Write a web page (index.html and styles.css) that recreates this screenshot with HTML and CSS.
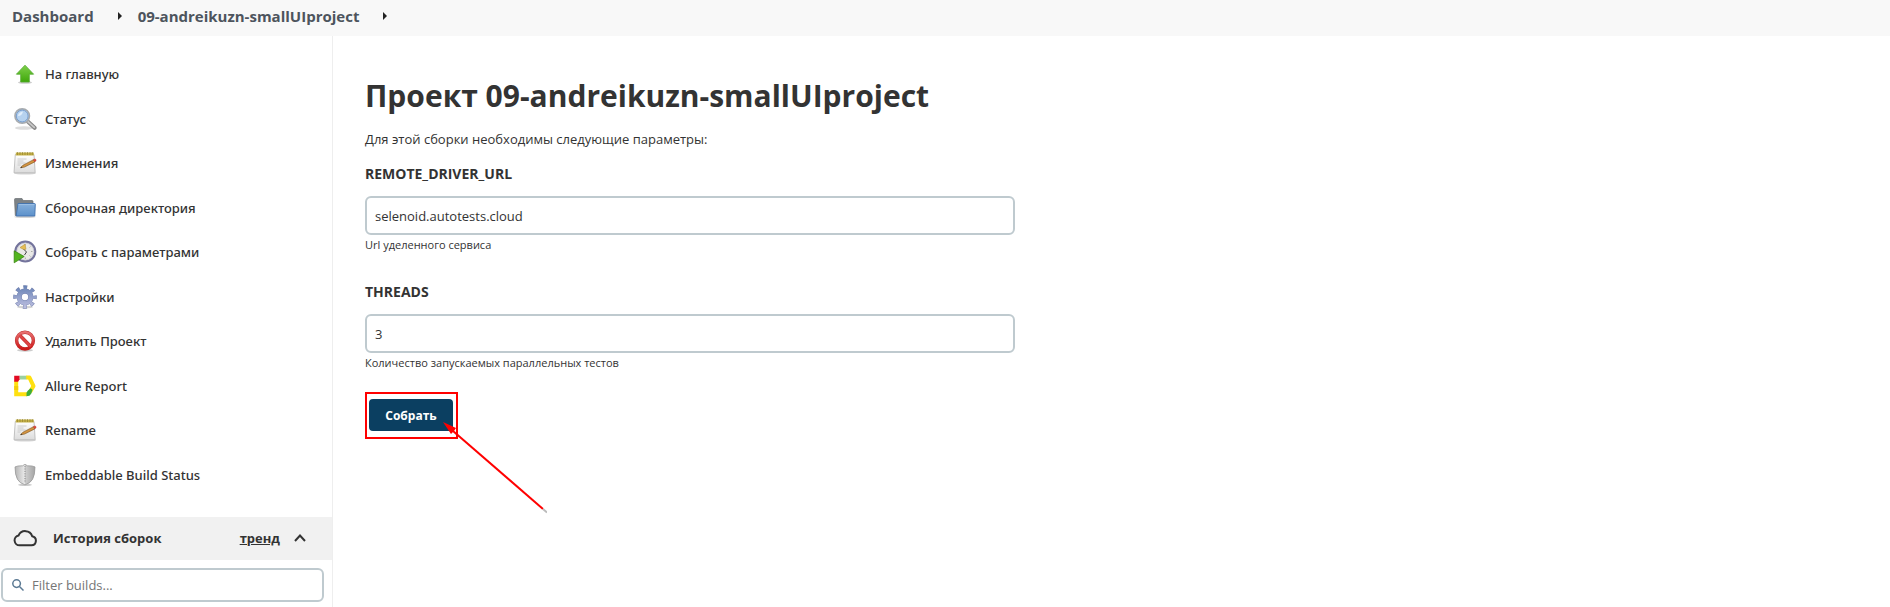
FILE: index.html
```html
<!DOCTYPE html>
<html lang="ru">
<head>
<meta charset="utf-8">
<title>09-andreikuzn-smallUIproject</title>
<link rel="stylesheet" href="styles.css">
</head>
<body>
<svg class="defs" aria-hidden="true">
  <defs>
    <linearGradient id="green" x1="0" y1="0" x2="0" y2="1"><stop offset="0" stop-color="#7ed04a"/><stop offset="1" stop-color="#3fa70a"/></linearGradient>
    <linearGradient id="paper" x1="0" y1="0" x2="0" y2="1"><stop offset="0" stop-color="#fff"/><stop offset="1" stop-color="#dcdcdc"/></linearGradient>
    <linearGradient id="folder" x1="0" y1="0" x2="0" y2="1"><stop offset="0" stop-color="#86b0dc"/><stop offset="1" stop-color="#5c91ca"/></linearGradient>
    <linearGradient id="gear" gradientUnits="userSpaceOnUse" x1="12" y1="0" x2="12" y2="24"><stop offset="0" stop-color="#6480b4"/><stop offset="1" stop-color="#c2c2e2"/></linearGradient>
    <linearGradient id="red" x1="0" y1="0" x2="0" y2="1"><stop offset="0" stop-color="#e87070"/><stop offset="1" stop-color="#cc1818"/></linearGradient>
    <linearGradient id="steel" x1="0" y1="0" x2="1" y2="0"><stop offset="0" stop-color="#b4b4b4"/><stop offset=".5" stop-color="#ececec"/><stop offset=".5" stop-color="#d0d0d0"/><stop offset="1" stop-color="#a4a4a4"/></linearGradient>
    <symbol id="notepad" viewBox="0 0 24 24">
      <ellipse cx="12" cy="22.3" rx="11" ry="1.2" fill="#bbb" opacity=".6"/>
      <path d="M2.300 3.500h18.700l1.200 18.300H1z" fill="url(#paper)" stroke="#b4b4b4" stroke-width=".8"/>
      <path d="M2.800 1.500h18v3h-18z" fill="#c5b148"/>
      <path d="M4.500 1v3M7 1v3M9.500 1v3M12 1v3M14.500 1v3M17 1v3M19.300 1v3" stroke="#8a7a2c" stroke-width=".6"/>
      <path d="M4.500 8h9M4.500 10h6M4.500 12h8M4.500 14h3" stroke="#c2c2c2" stroke-width=".8"/>
      <path d="M7.500 16.800l2.500-2.600L20.500 8.700l1.300 2.200-10.300 5.200z" fill="#d49440" stroke="#77501c" stroke-width=".6"/>
      <path d="M20.200 8.700l1.600-.8q1.700.2 1.300 1.900l-1.200 1z" fill="#e6463c" stroke="#a8352b" stroke-width=".4"/>
      <path d="M7.500 16.800l1-1.200.8.900z" fill="#222"/>
    </symbol>
  </defs>
</svg>

<nav class="breadcrumbs" aria-label="Breadcrumb">
  <a href="#">Dashboard</a>
  <svg class="crumb-arrow" viewBox="0 0 4 8"><path d="M0 0l4 4-4 4z"/></svg>
  <a href="#">09-andreikuzn-smallUIproject</a>
  <svg class="crumb-arrow" viewBox="0 0 4 8"><path d="M0 0l4 4-4 4z"/></svg>
</nav>

<div class="page">
  <aside class="side">
    <nav class="tasks">
      <a class="task" href="#"><svg class="icon" viewBox="0 0 24 24"><ellipse cx="12" cy="20.500" rx="7" ry="1.300" fill="#aaa" opacity=".6"/><path d="M12 3.200l8.600 9h-4.300v7.800H7.700v-7.800H3.400z" fill="url(#green)" stroke="#51a82c" stroke-width=".8"/></svg>На главную</a>
      <a class="task" href="#"><svg class="icon" viewBox="0 0 24 24"><ellipse cx="11" cy="21" rx="9" ry="1.800" fill="#bbb" opacity=".5"/><path d="M14.800 14.500l6.800 6.300" stroke="#888" stroke-width="4" stroke-linecap="round"/><path d="M14.800 14.500l6.500 5.900" stroke="#c8c8c8" stroke-width="1.800" stroke-linecap="round"/><circle cx="9.200" cy="9" r="7.200" fill="#b8d2ef" stroke="#a7abaf" stroke-width="1.700"/><circle cx="9.200" cy="9" r="5.900" fill="#b6d2ef" stroke="#799fce" stroke-width="1"/><path d="M5 9q.5-4 5-4.500Q9 9 5 9z" fill="#e1eefb"/></svg>Статус</a>
      <a class="task" href="#"><svg class="icon"><use href="#notepad"/></svg>Изменения</a>
      <a class="task" href="#"><svg class="icon" viewBox="0 0 24 24"><ellipse cx="12" cy="20.800" rx="11" ry="1.200" fill="#aaa" opacity=".5"/><path d="M1.500 3.500q0-1 1-1H9l1.200 2H19q1 0 1 1v14H2.300z" fill="#7c8286" stroke="#6a6e71" stroke-width=".7"/><path d="M5 7.500h16.500q.8 0 .8.800l-.5 11.700H3.200z" fill="url(#folder)" stroke="#3f70ae" stroke-width=".9"/><path d="M5.500 8.600h15.800" stroke="#a9c8ea" stroke-width=".7"/></svg>Сборочная директория</a>
      <a class="task" href="#"><svg class="icon" viewBox="0 0 24 24"><circle cx="12.300" cy="11.500" r="9.900" fill="#e9e9e6" stroke="#74749c" stroke-width="2.200"/><circle cx="12.300" cy="11.500" r="8.500" fill="none" stroke="#c5c5d4" stroke-width=".7"/><path d="M12.300 4v1.500M19.500 11.500H18M12.300 19v-1.500M17.500 6.500l-1 1M17.500 16.500l-1-1" stroke="#999" stroke-width=".8"/><path d="M7 7.500l5-3.300 1 5-2 .5z" fill="#e5bd54" stroke="#b38b2d" stroke-width=".5"/><path d="M11 9.500l2.500 2.500-2 3" fill="none" stroke="#444" stroke-width="1"/><path d="M1.200 10.800l10 5.700-10 6.300z" fill="#53b51e" stroke="#388710" stroke-width=".8"/></svg>Собрать с параметрами</a>
      <a class="task" href="#"><svg class="icon" viewBox="0 0 24 24"><ellipse cx="12" cy="22" rx="8" ry="1.300" fill="#aaa" opacity=".5"/><g fill="none"><circle cx="12" cy="12" r="9.600" stroke="#7885b0" stroke-width="4.400" stroke-dasharray="3.770 3.770" stroke-dashoffset="1.890"/><circle cx="12" cy="12" r="5.800" stroke="#7885b0" stroke-width="5.200"/><circle cx="12" cy="12" r="9.400" stroke="url(#gear)" stroke-width="3.600" stroke-dasharray="2.900 4.480" stroke-dashoffset="1.450"/><circle cx="12" cy="12" r="5.900" stroke="url(#gear)" stroke-width="4.400"/></g></svg>Настройки</a>
      <a class="task" href="#"><svg class="icon" viewBox="0 0 24 24"><ellipse cx="12" cy="21.300" rx="8" ry="1.400" fill="#999" opacity=".5"/><path d="M6.500 6l11.200 11.500" stroke="#c92a2a" stroke-width="3.400"/><circle cx="12" cy="11.600" r="8.400" fill="none" stroke="#b93030" stroke-width="3.400"/><circle cx="12" cy="11.600" r="8.400" fill="none" stroke="url(#red)" stroke-width="2.600"/><path d="M6.500 6l11.200 11.500" stroke="#de4545" stroke-width="2.400"/></svg>Удалить Проект</a>
      <a class="task" href="#"><svg class="icon" viewBox="0 0 24 24"><path d="M3.200 6.500v13.800H14" fill="none" stroke="#ffe010" stroke-width="4"/><path d="M13 3.600h3.500l4 8.500-3.500 6" fill="none" stroke="#ffe010" stroke-width="4" stroke-linejoin="round"/><path d="M1.200 1.700h5.500v3.500l-1.600 2.500H1.200z" fill="#e30a22"/><path d="M6.700 1.700h6.500v3.800H6.700z" fill="#9bd0a0"/><path d="M14.500 17l3-2.800 2 1.500-1.300 4q-1.200 2.600-4.700 2.600v-3.500z" fill="#3eae3a"/><path d="M1.200 12h4v4h-4z" fill="#f4cc08"/></svg>Allure Report</a>
      <a class="task" href="#"><svg class="icon"><use href="#notepad"/></svg>Rename</a>
      <a class="task" href="#"><svg class="icon" viewBox="0 0 24 24"><ellipse cx="12" cy="21.800" rx="7" ry="1.200" fill="#aaa" opacity=".6"/><path d="M12 1.300l2.500 1.500 4.500.2 3 .9q0 8-2.500 12.500-2.200 3.700-7.500 5.500-5.300-1.800-7.500-5.500Q2 11.900 2 3.900l3-.9 4.500-.2z" fill="url(#steel)" stroke="#999" stroke-width=".8"/><path d="M12 3v17" stroke="#858585" stroke-width="1" stroke-dasharray="1.200 1.200"/></svg>Embeddable Build Status</a>
    </nav>

    <section class="history">
      <header class="history-head">
        <svg class="icon" viewBox="0 0 24 24"><path d="M6.500 19.300h12a4.600 4.600 0 0 0 .7-9.100A7.300 7.300 0 0 0 5.600 9.400a5 5 0 0 0 .9 9.900z" fill="none" stroke="#333" stroke-width="2"/></svg>
        <h2>История сборок</h2>
        <a href="#">тренд</a>
        <button class="collapse" type="button" aria-label="Свернуть"><svg viewBox="0 0 12 8"><path d="M1 7l5-5.500L11 7"/></svg></button>
      </header>
      <label class="filter">
        <svg viewBox="0 0 12 12"><circle cx="4.600" cy="4.600" r="3.800"/><path d="M7.500 7.500l4 4"/></svg>
        <input type="search" placeholder="Filter builds..." aria-label="Filter builds">
      </label>
    </section>
  </aside>

  <main class="main">
    <h1>Проект 09-andreikuzn-smallUIproject</h1>
    <p class="intro">Для этой сборки необходимы следующие параметры:</p>
    <form class="params">
      <div class="param">
        <label for="url">REMOTE_DRIVER_URL</label>
        <input id="url" type="text" value="selenoid.autotests.cloud">
        <p>Url уделенного сервиса</p>
      </div>
      <div class="param">
        <label for="threads">THREADS</label>
        <input id="threads" type="text" value="3">
        <p>Количество запускаемых параллельных тестов</p>
      </div>
      <div class="submit">
        <button type="button">Собрать</button>
        <svg class="pointer" viewBox="0 0 104 92"><path d="M100 87L10 9" stroke="red" stroke-width="2"/><path d="M104 90.500L100 87" stroke="#bbb" stroke-width="2"/><path d="M0 0l13 6-2 3-3 3z" fill="red"/></svg>
      </div>
    </form>
  </main>
</div>
</body>
</html>
```

FILE: styles.css
```css
* { box-sizing: border-box; }

body {
  margin: 0;
  min-height: 100vh;
  display: flex;
  flex-direction: column;
  overflow: hidden;
  background: #fff;
  color: #333;
  font-family: "Open Sans", "Noto Sans", sans-serif;
  font-size: 13px;
}

h1, h2, p { margin: 0; }
a { color: inherit; text-decoration: none; }
.defs { position: absolute; width: 0; height: 0; }

.breadcrumbs {
  display: flex;
  align-items: center;
  height: 36px;
  padding: 0 12px 4px;
  background: #f8f8f8;
  color: #4d545d;
  font-size: 15px;
  font-weight: 700;
}
.crumb-arrow { width: 4px; height: 8px; margin: 0 16px 0 24px; fill: #222; }

.page { display: flex; flex: 1; }

.side {
  flex: none;
  width: 333px;
  border-right: 1px solid #eee;
}
.tasks {
  display: flex;
  flex-direction: column;
  height: 481px;
  padding: 16px 0 20px;
}
.task {
  flex: 1;
  display: flex;
  align-items: center;
  gap: 8px;
  padding-left: 13px;
  font-family: "Noto Sans", sans-serif;
  font-weight: 500;
}
.icon { flex: none; width: 24px; height: 24px; }

.history-head {
  display: flex;
  align-items: center;
  height: 43px;
  padding: 0 24px 2px 13px;
  background: #f1f1f1;
}
.history-head h2 {
  flex: 1;
  margin-left: 16px;
  font-size: 13px;
  font-weight: 700;
}
.history-head a { font-weight: 700; text-decoration: underline; }
.collapse { padding: 0; margin-left: 12px; border: 0; background: none; width: 16px; height: 16px; }
.collapse svg { width: 12px; height: 8px; fill: none; stroke: #333; stroke-width: 2; }

.filter {
  display: flex;
  align-items: center;
  gap: 8px;
  height: 34px;
  margin: 8px 8px 0 1px;
  padding: 0 9px;
  border: 2px solid #bfcacf;
  border-radius: 6px;
}
.filter svg { width: 12px; height: 12px; fill: none; stroke: #5c7a94; stroke-width: 1.5; }
.filter input { flex: 1; min-width: 0; padding: 0; border: 0; outline: 0; background: none; font: inherit; }
.filter input::placeholder { color: #767676; }

.main { flex: 1; min-width: 0; padding: 40px 32px 0; }
h1 { font-size: 30px; line-height: 40px; font-weight: 700; }
.intro { margin-top: 13px; line-height: 20px; }
.params { max-width: 650px; }
.param { display: flex; flex-direction: column; padding-top: 15px; }
.param + .param { padding-top: 27px; }
.param label { font-size: 14px; line-height: 20px; font-weight: 700; }
.param input {
  height: 39px;
  margin-top: 12px;
  padding: 0 8px;
  border: 2px solid #bfcacf;
  border-radius: 6px;
  color: #333;
  font: inherit;
}
.param p { font-size: 11px; line-height: 20px; }

.submit {
  position: relative;
  width: fit-content;
  margin-top: 19px;
  padding: 5px 3px 6px 2px;
  border: 2px solid #f00;
}
.submit button {
  display: block;
  width: 84px;
  height: 32px;
  padding: 0;
  border: 0;
  border-radius: 4px;
  background: #0b3f61;
  color: #fff;
  font: inherit;
  font-size: 12px;
  font-weight: 700;
}
.pointer { position: absolute; left: 76px; top: 28px; width: 104px; height: 92px; }
```
